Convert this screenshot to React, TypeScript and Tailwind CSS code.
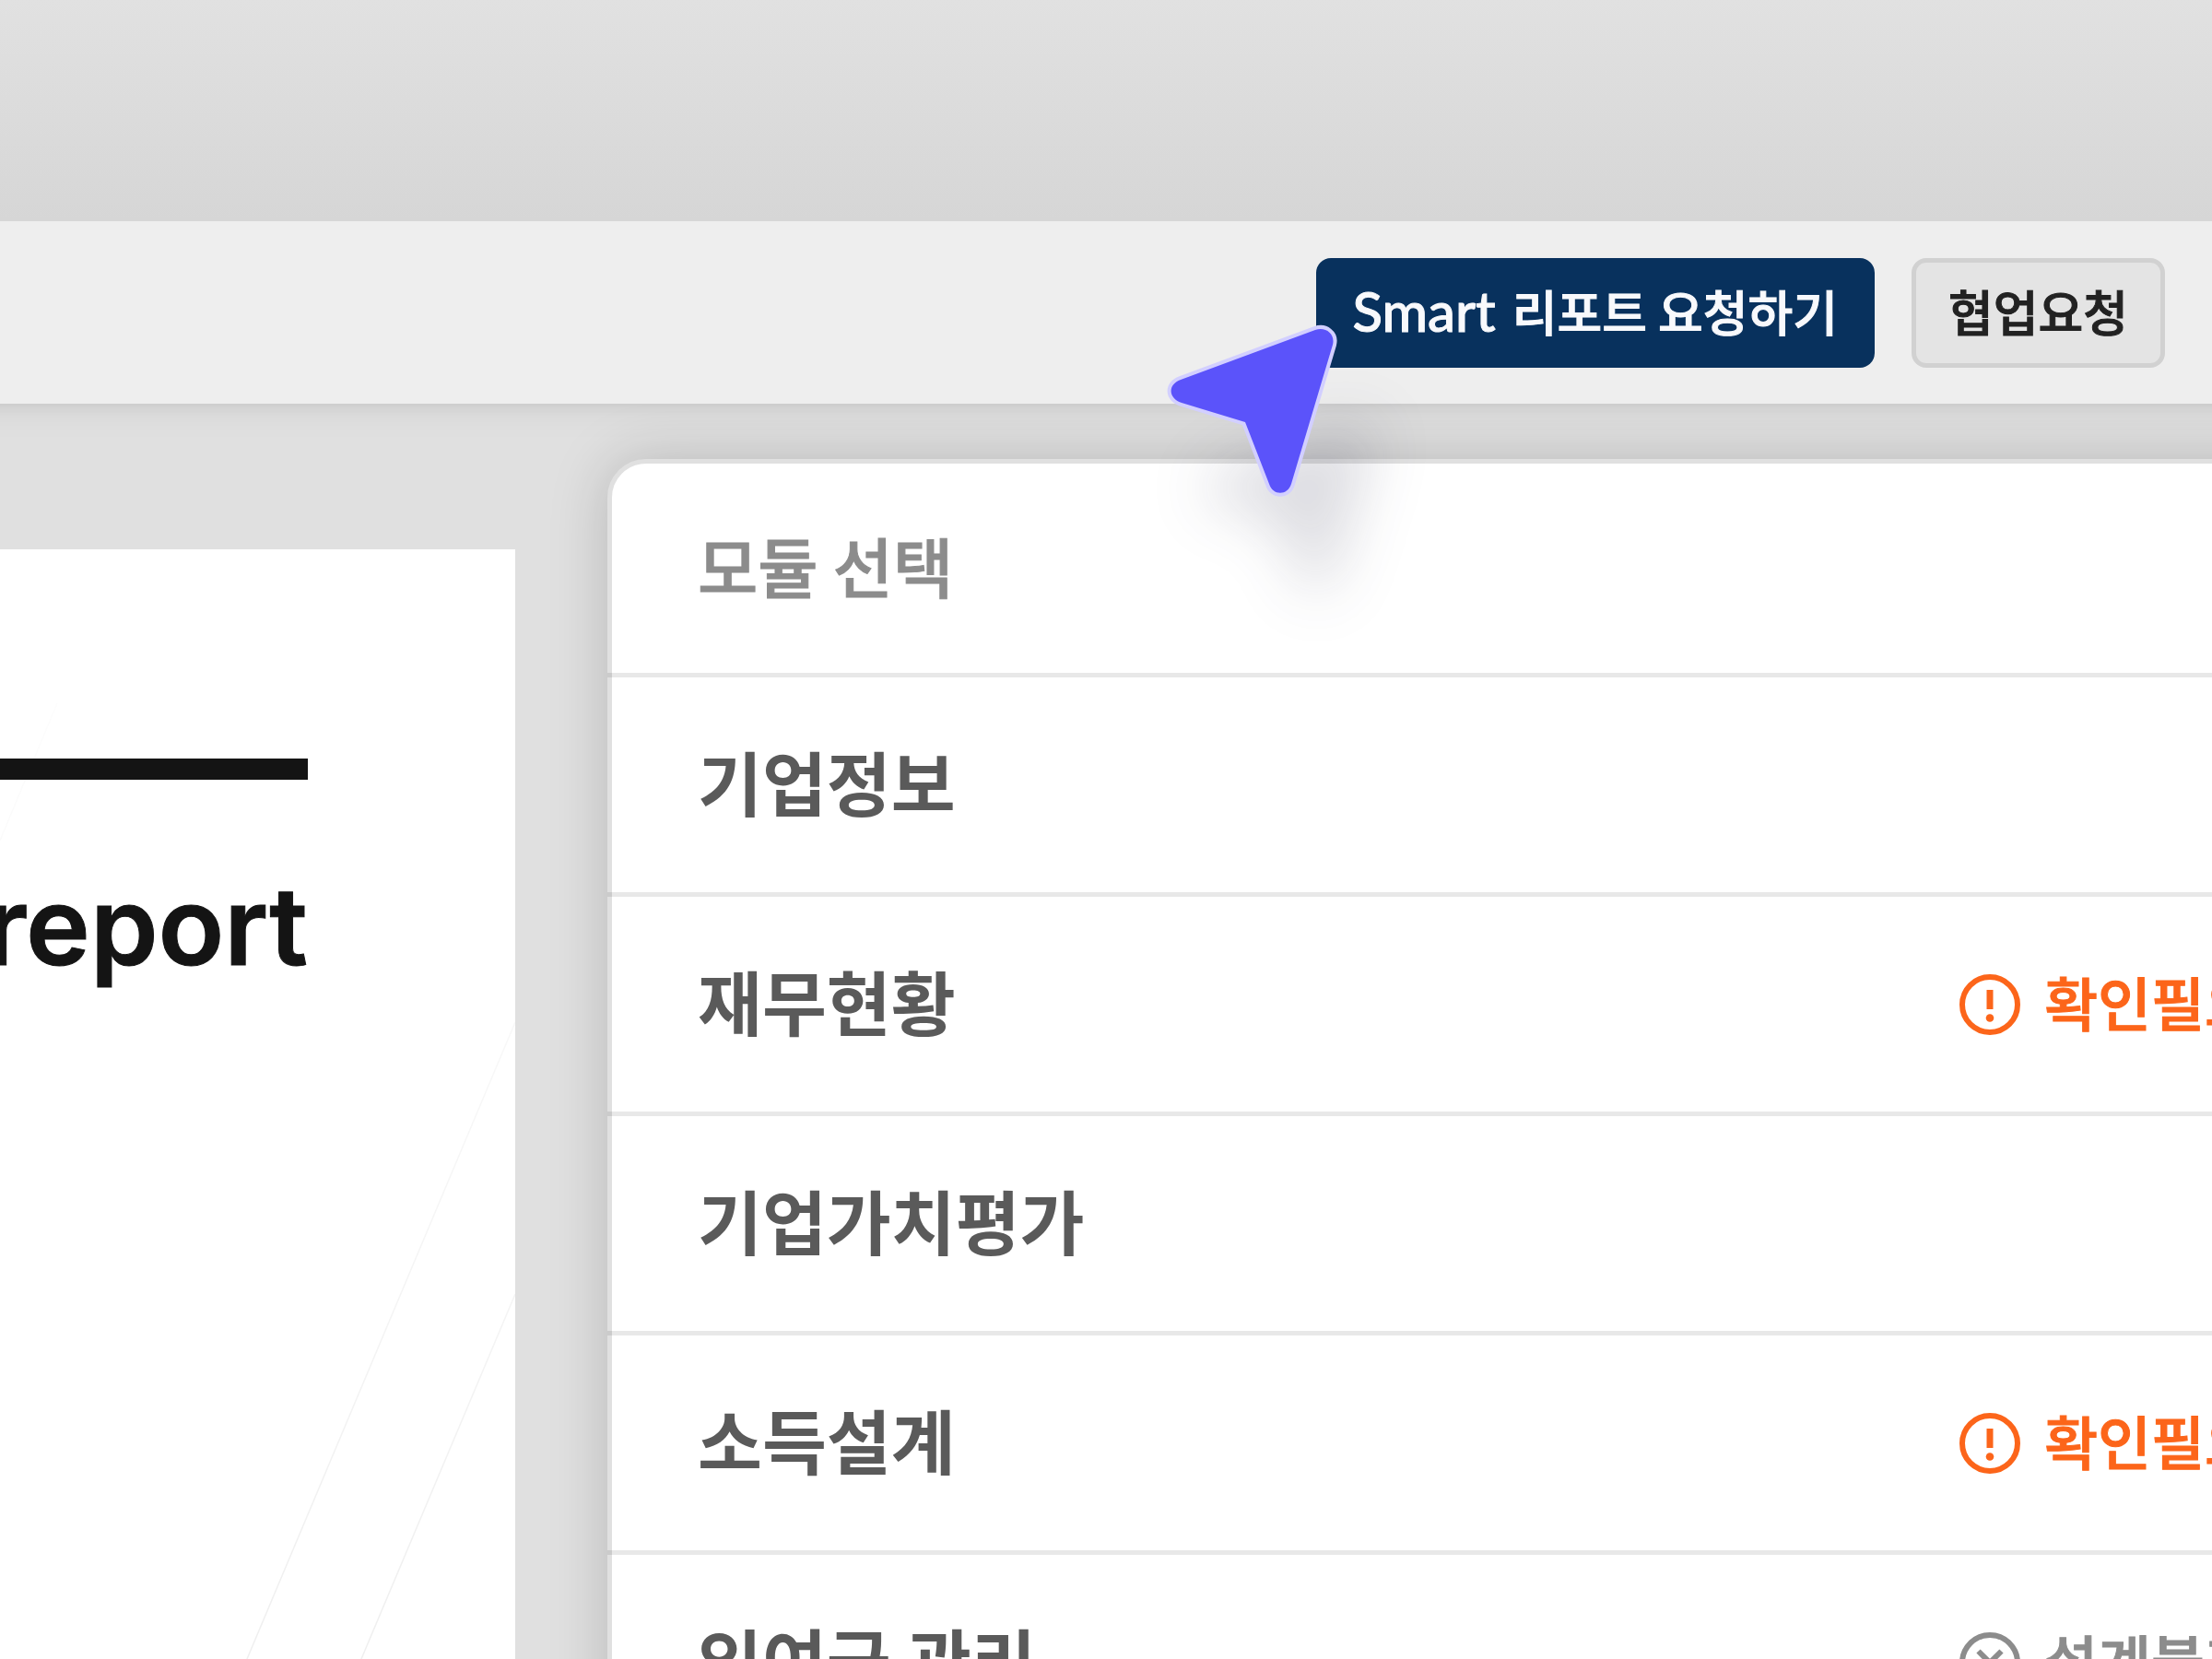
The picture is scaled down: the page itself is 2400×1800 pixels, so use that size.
type Status = "check" | "blocked";

interface Module {
  name: string;
  status?: Status;
}

const modules: Module[] = [
  { name: "기업정보" },
  { name: "재무현황", status: "check" },
  { name: "기업가치평가" },
  { name: "소득설계", status: "check" },
  { name: "잉여금 관리", status: "blocked" },
];

function AlertIcon() {
  return (
    <svg viewBox="0 0 66 66" className="w-[66px] h-[66px] shrink-0" fill="none" aria-hidden="true">
      <circle cx="33" cy="33" r="30" stroke="currentColor" strokeWidth="6" />
      <rect x="29.5" y="17" width="7" height="21" fill="currentColor" />
      <circle cx="33" cy="47.5" r="4.3" fill="currentColor" />
    </svg>
  );
}

function BlockedIcon() {
  return (
    <svg viewBox="0 0 66 66" className="w-[66px] h-[66px] shrink-0" fill="none" aria-hidden="true">
      <circle cx="33" cy="33" r="30" stroke="currentColor" strokeWidth="6" />
      <path d="M20.5 20.5 45.5 45.5M45.5 20.5 20.5 45.5" stroke="currentColor" strokeWidth="6" />
    </svg>
  );
}

function StatusLabel({ status }: { status: Status }) {
  if (status === "check") {
    return (
      <span className="flex items-center gap-[26px] text-[63px] leading-none font-medium [-webkit-text-stroke:1px] text-[#fc651a]">
        <AlertIcon />
        <span className="pb-2">확인필요</span>
      </span>
    );
  }
  return (
    <span className="flex items-center gap-[26px] text-[63px] leading-none font-medium [-webkit-text-stroke:1px] text-[#8c8c8c]">
      <BlockedIcon />
      <span className="pb-2">설계불가</span>
    </span>
  );
}

function Cursor() {
  return (
    <svg
      viewBox="0 0 184 186"
      className="absolute -left-[161px] top-[73px] w-[184px] h-[186px] overflow-visible pointer-events-none drop-shadow-[40px_105px_32px_rgba(40,40,70,0.16)]"
      aria-hidden="true"
    >
      <path
        d="M14 59 L160 5 C171 1 182 9 179 21 L134 172 C130 185 114 185 110 172 L84 105 L15 84 C0 79 0 64 14 59 Z"
        fill="#5b53fa"
        stroke="#d2cfff"
        strokeWidth="8"
        strokeLinejoin="round"
        paintOrder="stroke"
      />
    </svg>
  );
}

function Header() {
  return (
    <header className="relative z-10 shrink-0 flex items-center justify-end gap-10 h-[198px] -mx-10 pr-[91px] bg-[#eeeeee] shadow-[0_2px_12px_rgba(0,0,0,0.08),0_8px_36px_rgba(0,0,0,0.06)]">
      <div className="relative">
        <button className="block h-[119px] px-10 pb-1 rounded-2xl bg-[#08315d] text-[#f8f9fc] text-[53px] leading-none font-medium [-webkit-text-stroke:1px] whitespace-nowrap">
          <span className="mr-1.5 font-['Lato',sans-serif] text-[60px] leading-none">Smart</span> 리포트 요청하기
        </button>
        <Cursor />
      </div>
      <button className="h-[119px] px-[35px] pb-1 rounded-2xl border-5 border-[#d1d1d1] bg-[#e4e4e4] text-[#222222] text-[53px] leading-none font-medium [-webkit-text-stroke:1px] whitespace-nowrap">
        협업요청
      </button>
    </header>
  );
}

function ReportPaper() {
  return (
    <section className="relative w-[559px] shrink-0 mt-[158px] pt-[227px] pr-[225px] bg-white overflow-hidden">
      {/* Faint diagonal lines on the cover */}
      <svg viewBox="0 0 559 1204" className="absolute left-0 top-0 w-[559px] h-[1204px]" fill="none" aria-hidden="true">
        <defs>
          <linearGradient id="coverLine" gradientUnits="userSpaceOnUse" x1="0" y1="160" x2="0" y2="1204">
            <stop offset="0" stopColor="#fdfdfd" />
            <stop offset="1" stopColor="#efefef" />
          </linearGradient>
        </defs>
        <path d="M62 167 0 316M559 513 268 1204M559 808 392 1204" stroke="url(#coverLine)" strokeWidth="1.5" />
      </svg>
      <div className="relative h-[23px] bg-[#141414]" />
      <h1 className="relative flex justify-end mt-[88px] font-['Inter',sans-serif] text-[118px] leading-[140px] font-semibold [-webkit-text-stroke:1px] text-[#141414]">
        report
      </h1>
    </section>
  );
}

function ModulePanel() {
  return (
    <section className="flex-1 mt-[60px] -mr-[153px] rounded-tl-[42px] border-5 border-[#e0e0e0] bg-white shadow-[0_0_64px_rgba(0,0,0,0.18)]">
      <h2 className="flex items-center h-[232px] -ml-[5px] px-[98px] pb-2 border-b-5 border-black/9 text-[71px] leading-none font-medium [-webkit-text-stroke:1px] text-[#8c8c8c]">
        모듈 선택
      </h2>
      <ul className="-ml-[5px]">
        {modules.map((module) => (
          <li key={module.name} className="border-b-5 border-black/9">
            <button className="flex items-center justify-between w-full h-[233px] px-[98px] text-left whitespace-nowrap">
              <span className="pb-2.5 text-[76px] leading-none font-bold text-[#5a5a5a]">{module.name}</span>
              {module.status && <StatusLabel status={module.status} />}
            </button>
          </li>
        ))}
      </ul>
    </section>
  );
}

export default function App() {
  return (
    <div className="flex flex-col h-screen overflow-hidden bg-[#e0e0e0] font-['Noto_Sans_CJK_KR',sans-serif]">
      <div className="relative z-20 h-[240px] shrink-0 bg-linear-to-b from-[#e1e1e1] to-[#d6d6d6]" />
      <Header />
      <main className="flex grow shrink-0 gap-[100px]">
        <ReportPaper />
        <ModulePanel />
      </main>
    </div>
  );
}
